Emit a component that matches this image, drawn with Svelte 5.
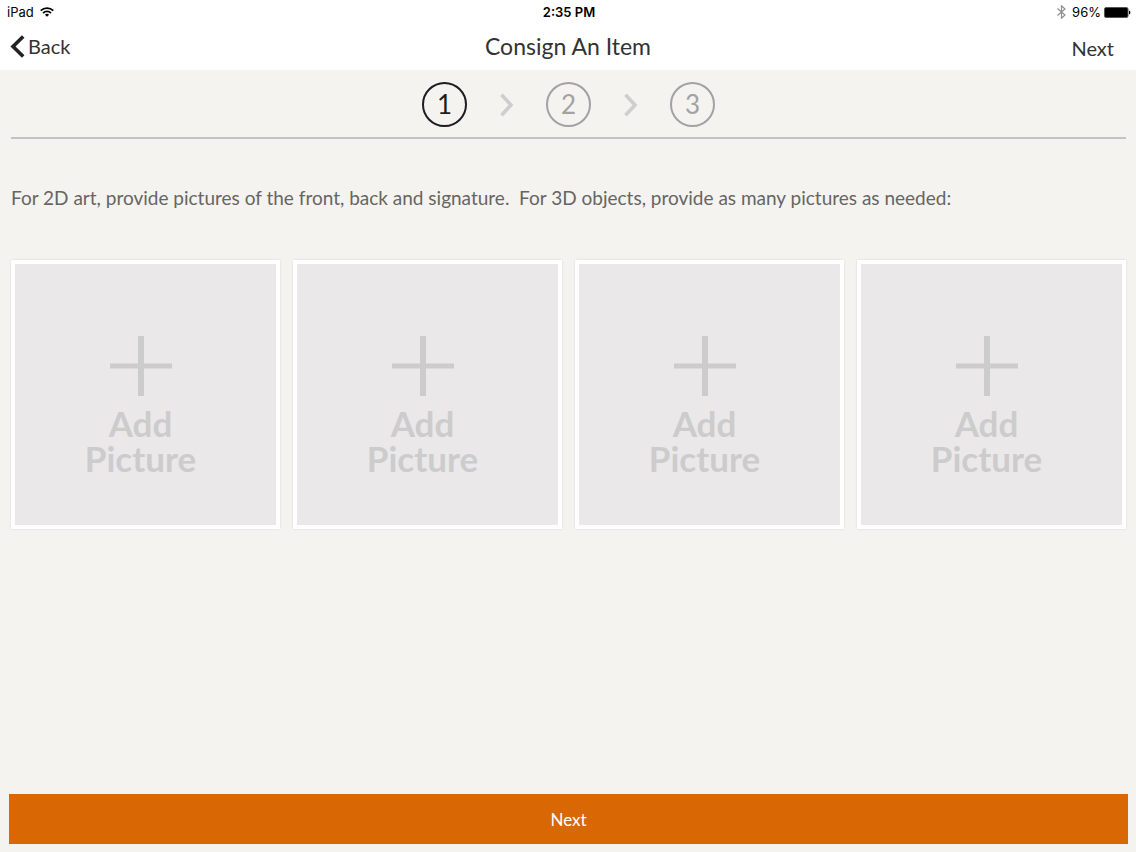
<script>
    let step = $state(1);

    const steps = [1, 2, 3];
    const slots = [0, 1, 2, 3];

    function next() {
        if (step < steps.length) step += 1;
    }

    function back() {
        if (step > 1) step -= 1;
    }
</script>

<div class="screen">
    <header>
        <div class="status">
            <div class="status-side">
                <span>iPad</span>
                <svg width="14" height="10" viewBox="0 0 14 10" fill="none" stroke="#000" stroke-width="1.7">
                    <path d="M0.7 3.7a9 9 0 0 1 12.6 0" />
                    <path d="M3 6.1a5.7 5.7 0 0 1 8 0" />
                    <path d="M7 9.8 4.9 7.7a3 3 0 0 1 4.2 0z" fill="#000" stroke="none" />
                </svg>
            </div>
            <span class="time">2:35 PM</span>
            <div class="status-side is-end">
                <svg width="9" height="14" viewBox="0 0 9 14" fill="none" stroke="#8e8e8e" stroke-width="1.2">
                    <path d="M0.5 3.5 8 10 4.5 13.2V0.8L8 4 0.5 10.5" />
                </svg>
                <span class="battery">96%</span>
                <svg width="27" height="11" viewBox="0 0 27 11">
                    <rect x="0.5" y="0.5" width="23.5" height="10" rx="1.6" fill="#000" stroke="#555" />
                    <path d="M25 3.5c1.8 .5 1.8 3.5 0 4z" fill="#000" />
                </svg>
            </div>
        </div>
        <nav>
            <button class="nav-button" onclick={back}>
                <svg width="15" height="23" viewBox="0 0 15 23" fill="none" stroke="#222" stroke-width="3.6">
                    <path d="M13.2 1.5 3 11.5 13.2 21.5" />
                </svg>
                Back
            </button>
            <h1>Consign An Item</h1>
            <button class="nav-button is-next" onclick={next}>Next</button>
        </nav>
    </header>

    <main>
        <ol class="steps">
            {#each steps as number, index}
                {#if index > 0}
                    <li class="arrow" aria-hidden="true">
                        <svg width="14" height="24" viewBox="0 0 14 24" fill="none" stroke="#cfcecc" stroke-width="3.6">
                            <path d="M1.5 1.8 11 12 1.5 22.2" />
                        </svg>
                    </li>
                {/if}
                <li class="step" class:active={number === step}>{number}</li>
            {/each}
        </ol>

        <p>For 2D art, provide pictures of the front, back and signature.&nbsp; For 3D objects, provide as many pictures as needed:</p>

        <div class="pictures">
            {#each slots as slot (slot)}
                <button class="picture">
                    <svg width="62" height="60" viewBox="0 0 62 60" stroke="#cdcccd">
                        <path d="M31 0V60" stroke-width="6" />
                        <path d="M0 30H62" stroke-width="5" />
                    </svg>
                    <span>Add<br />Picture</span>
                </button>
            {/each}
        </div>
    </main>

    <footer>
        <button class="submit" onclick={next}>Next</button>
    </footer>
</div>

<style>
    :global(body) {
        margin: 0;
        background-color: #f4f3f0;
    }

    .screen {
        display: flex;
        flex-direction: column;
        min-height: 100vh;
        font-family: Lato, "Open Sans", sans-serif;
        color: #333;
    }

    button {
        font: inherit;
        color: inherit;
        border: 0;
        padding: 0;
        background: none;
        cursor: pointer;
    }

    header {
        background-color: #fff;
        padding-bottom: 2px;
    }

    .status {
        display: grid;
        grid-template-columns: 1fr auto 1fr;
        align-items: center;
        height: 24px;
        padding: 0 5px 0 7px;
        font: 13px/24px Inter, Roboto, sans-serif;
        color: #000;
    }
    .status-side {
        display: flex;
        align-items: center;
        gap: 6px;
    }
    .status-side.is-end {
        justify-content: flex-end;
    }
    .battery {
        margin-right: -3px;
    }
    .time {
        font-weight: 600;
    }

    nav {
        display: grid;
        grid-template-columns: 1fr auto 1fr;
        align-items: center;
        height: 44px;
        padding: 0 22px 0 10px;
    }
    .nav-button {
        display: flex;
        align-items: center;
        gap: 3px;
        justify-self: start;
        font-size: 20px;
        line-height: 24px;
    }
    .nav-button.is-next {
        justify-self: end;
        padding-top: 4px;
    }
    h1 {
        margin: 0 0 0 12px;
        font-size: 23px;
        line-height: 28px;
        font-weight: 400;
    }

    main {
        flex: 1;
        padding: 0 10px 0 11px;
    }

    .steps {
        display: flex;
        align-items: center;
        justify-content: center;
        margin: 0;
        padding: 12px 0 10px;
        border-bottom: 2px solid #c4c3c1;
        list-style: none;
    }
    .step {
        box-sizing: border-box;
        width: 45px;
        height: 45px;
        border: 2px solid #a3a2a0;
        border-radius: 50%;
        color: #a3a2a0;
        font-size: 26px;
        line-height: 40px;
        text-align: center;
    }
    .step.active {
        border-color: #1e1e1e;
        color: #1e1e1e;
    }
    .arrow {
        display: flex;
        justify-content: center;
        width: 79px;
    }

    p {
        margin: 45px 0 49px;
        font-size: 19px;
        line-height: 27px;
        color: #666563;
    }

    .pictures {
        display: grid;
        grid-template-columns: repeat(4, 1fr);
        gap: 13px;
    }
    .picture {
        display: flex;
        flex-direction: column;
        align-items: center;
        justify-content: center;
        gap: 10px;
        box-sizing: border-box;
        aspect-ratio: 1;
        padding: 22px 10px 0 0;
        border: 4px solid #fff;
        background-color: #eae8e9;
        box-shadow: 0 0 2px rgba(0, 0, 0, 0.12);
        color: #cdcccd;
        font-size: 35px;
        line-height: 35px;
        font-weight: 700;
    }

    footer {
        padding: 8px 8px 8px 9px;
    }
    .submit {
        display: block;
        width: 100%;
        height: 50px;
        background-color: #d96704;
        color: #fff;
        font-size: 17px;
    }
</style>
